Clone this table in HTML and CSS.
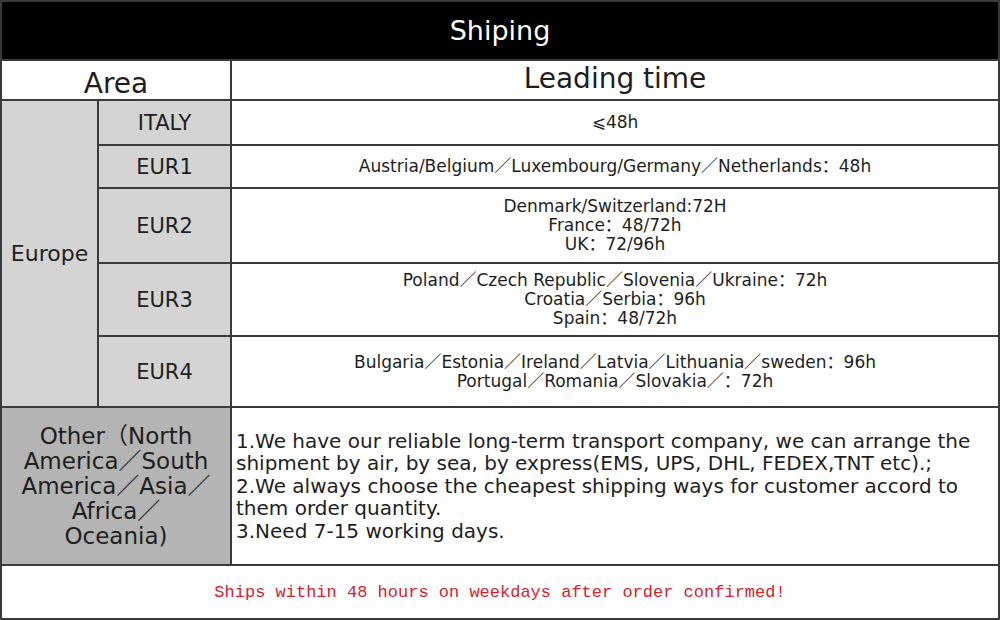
FILE: index.html
```html
<!DOCTYPE html>
<html>
<head>
<meta charset="utf-8">
<link rel="stylesheet" href="styles.css">
</head>
<body>
<div class="sheet">
  <div class="cell title">Shiping</div>
  <div class="cell area">Area</div>
  <div class="cell lead">Leading time</div>
  <div class="cell europe">Europe</div>
  <div class="cell zone r3">ITALY</div>
  <div class="cell val r3">⩽48h</div>
  <div class="cell zone r4">EUR1</div>
  <div class="cell val r4">Austria/Belgium／Luxembourg/Germany／Netherlands：48h</div>
  <div class="cell zone r5">EUR2</div>
  <div class="cell val r5">Denmark/Switzerland:72H<br>France：48/72h<br>UK：72/96h</div>
  <div class="cell zone r6">EUR3</div>
  <div class="cell val r6">Poland／Czech Republic／Slovenia／Ukraine：72h<br>Croatia／Serbia：96h<br>Spain：48/72h</div>
  <div class="cell zone r7">EUR4</div>
  <div class="cell val r7">Bulgaria／Estonia／Ireland／Latvia／Lithuania／sweden：96h<br>Portugal／Romania／Slovakia／：72h</div>
  <div class="cell other">Other（North<br>America／South<br>America／Asia／<br>Africa／<br>Oceania)</div>
  <div class="cell notes">1.We have our reliable long-term transport company, we can arrange the shipment by air, by sea, by express(EMS, UPS, DHL, FEDEX,TNT etc).;<br>2.We always choose the cheapest shipping ways for customer accord to them order quantity.<br>3.Need 7-15 working days.</div>
  <div class="cell foot">Ships within 48 hours on weekdays after order confirmed!</div>
</div>
</body>
</html>
```
FILE: styles.css
```css
html, body {
  margin: 0;
  padding: 0;
  background: #fff;
}
.sheet {
  width: 1000px;
  height: 620px;
  box-sizing: border-box;
  padding: 2px;
  background: #3a3a3a;
  display: grid;
  grid-template-columns: 95px 131px 766px;
  grid-template-rows: 57px 38px 43px 41px 73px 71px 69px 156px 52px;
  gap: 2px;
  font-family: "DejaVu Sans", "Noto Sans CJK SC", sans-serif;
  color: #1e1e1e;
}
.cell {
  background: #fff;
  display: flex;
  align-items: center;
  justify-content: center;
  text-align: center;
  overflow: hidden;
}
.title {
  grid-column: 1 / 4;
  background: #000;
  color: #fff;
  font-size: 27px;
}
.area {
  grid-column: 1 / 3;
  font-size: 28px;
  line-height: 30px;
  align-items: flex-end;
  overflow: visible;
}
.lead {
  font-size: 28px;
  padding-bottom: 4px;
}
.europe {
  grid-column: 1;
  grid-row: 3 / 8;
  background: #d4d4d4;
  font-size: 22px;
}
.zone {
  grid-column: 2;
  background: #d4d4d4;
  font-size: 21px;
}
.val {
  grid-column: 3;
  font-size: 17px;
  line-height: 19px;
}
.r3 { grid-row: 3; }
.r4 { grid-row: 4; }
.r5 { grid-row: 5; }
.r6 { grid-row: 6; }
.r7 { grid-row: 7; }
.other {
  grid-column: 1 / 3;
  background: #b4b4b4;
  font-size: 23px;
  line-height: 25px;
  padding: 0 4px;
  white-space: nowrap;
}
.notes {
  grid-column: 3;
  justify-content: flex-start;
  text-align: left;
  font-size: 20px;
  line-height: 22.5px;
  padding: 0 4px;
}
.foot {
  grid-column: 1 / 4;
  font-family: "Liberation Mono", monospace;
  color: #d8222c;
  font-size: 17px;
}
```
